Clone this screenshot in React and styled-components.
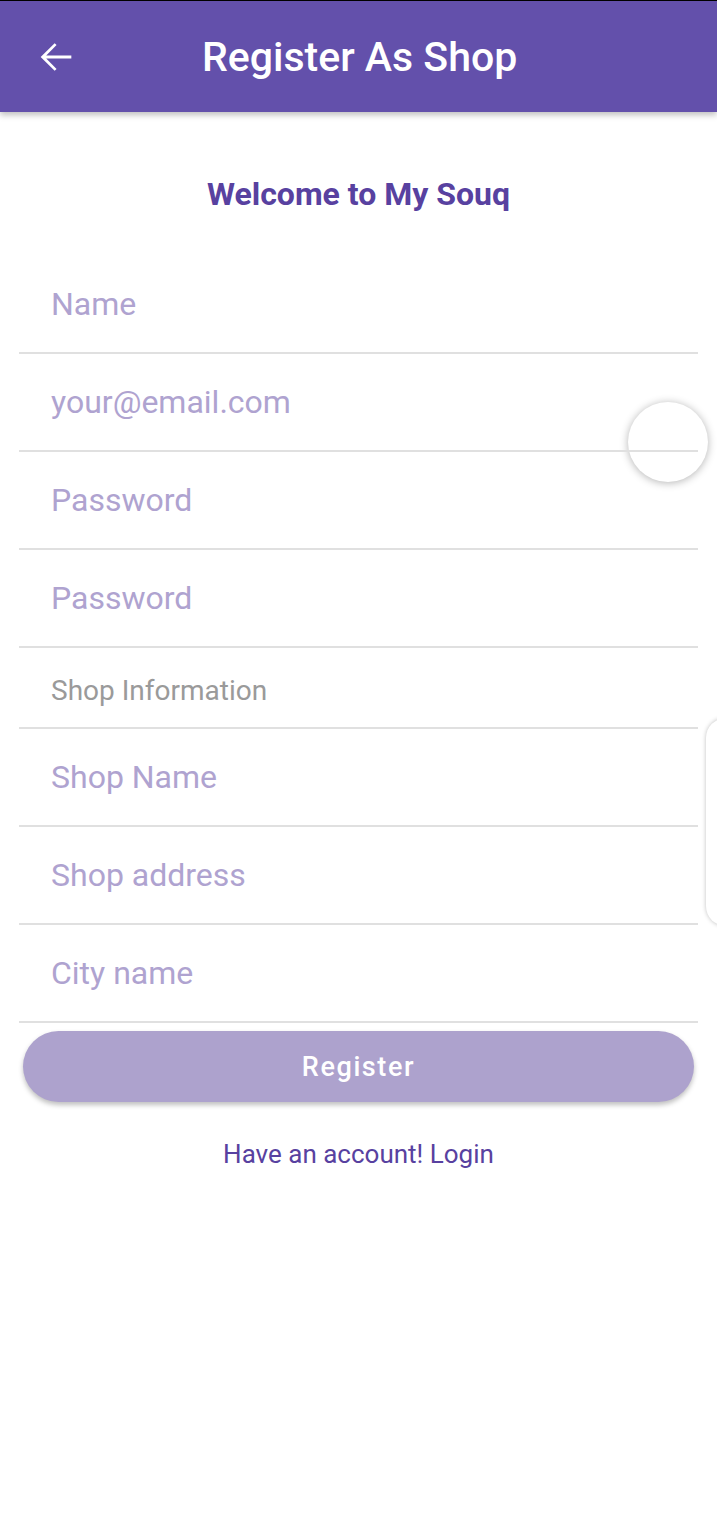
import React from "react";
import styled, { createGlobalStyle } from "styled-components";

const Global = createGlobalStyle`
  body {
    margin: 0;
    background: #ffffff;
    font-family: Roboto, "Noto Sans", sans-serif;
  }
`

const Page = styled.div`
  position: relative;
  width: 717px;
  min-height: 1520px;
  overflow: hidden;
  border-top: 1px solid #000;
  box-sizing: border-box;
`

const AppBar = styled.div`
  height: 111px;
  background: #6350ab;
  display: flex;
  align-items: center;
  box-shadow: 0 3px 6px rgba(0, 0, 0, 0.25);
  position: relative;
  z-index: 2;
`

const BackButton = styled.div`
  width: 112px;
  display: flex;
  justify-content: center;
`

const Title = styled.h1`
  margin: 0;
  padding-left: 90px;
  color: #fff;
  font-size: 41px;
  font-weight: 500;
`

const Welcome = styled.div`
  height: 144px;
  display: flex;
  justify-content: center;
  padding-top: 63px;
  box-sizing: border-box;
  color: #5841a0;
  font-size: 32px;
  font-weight: 700;
`

const Form = styled.div`
  position: relative;
  z-index: 1;
  padding: 0 19px;
`

const Field = styled.div`
  height: ${(p) => (p.section ? "74px" : "96px")};
  padding-top: ${(p) => (p.section ? "5px" : "0")};
  border-bottom: 2px solid #e0e0e0;
  display: flex;
  align-items: center;
  padding-left: 32px;
  color: ${(p) => (p.section ? "#9a9a9a" : "#afa3d0")};
  font-size: ${(p) => (p.section ? "28px" : "32px")};
`

const RegisterButton = styled.div`
  margin: 8px 23px 0;
  height: 71px;
  border-radius: 36px;
  background: #ada2cd;
  color: #fff;
  font-size: 27px;
  font-weight: 500;
  letter-spacing: 1.6px;
  display: flex;
  align-items: center;
  justify-content: center;
  box-shadow: 0 3px 5px rgba(0, 0, 0, 0.25);
`

const LoginLink = styled.div`
  text-align: center;
  margin-top: 37px;
  color: #5841a0;
  font-size: 26px;
`

const Bubble = styled.div`
  position: absolute;
  z-index: 0;
  left: 628px;
  top: 401px;
  width: 80px;
  height: 80px;
  border-radius: 50%;
  background: #fff;
  box-shadow: 0 1px 8px rgba(0, 0, 0, 0.3);
`

const SidePanel = styled.div`
  position: absolute;
  z-index: 3;
  left: 706px;
  top: 717px;
  width: 60px;
  height: 208px;
  border-radius: 20px;
  background: #fff;
  box-shadow: 0 0 4px rgba(0, 0, 0, 0.25);
`

export default function App() {
  return (
    <Page>
      <Global />
      <AppBar>
        <BackButton>
          <svg width="46" height="46" viewBox="0 0 24 24">
            <path d="M20 11.2H6.9l5.4-5.4L11.3 4.8 4 12l7.3 7.2 1-1-5.4-5.4H20v-1.6z" fill="#fff" />
          </svg>
        </BackButton>
        <Title>Register As Shop</Title>
      </AppBar>
      <Welcome>Welcome to My Souq</Welcome>
      <Form>
        <Field>Name</Field>
        <Field>your@email.com</Field>
        <Field>Password</Field>
        <Field>Password</Field>
        <Field section>Shop Information</Field>
        <Field>Shop Name</Field>
        <Field>Shop address</Field>
        <Field>City name</Field>
      </Form>
      <RegisterButton>Register</RegisterButton>
      <LoginLink>Have an account! Login</LoginLink>
      <Bubble />
      <SidePanel />
    </Page>
  );
}
